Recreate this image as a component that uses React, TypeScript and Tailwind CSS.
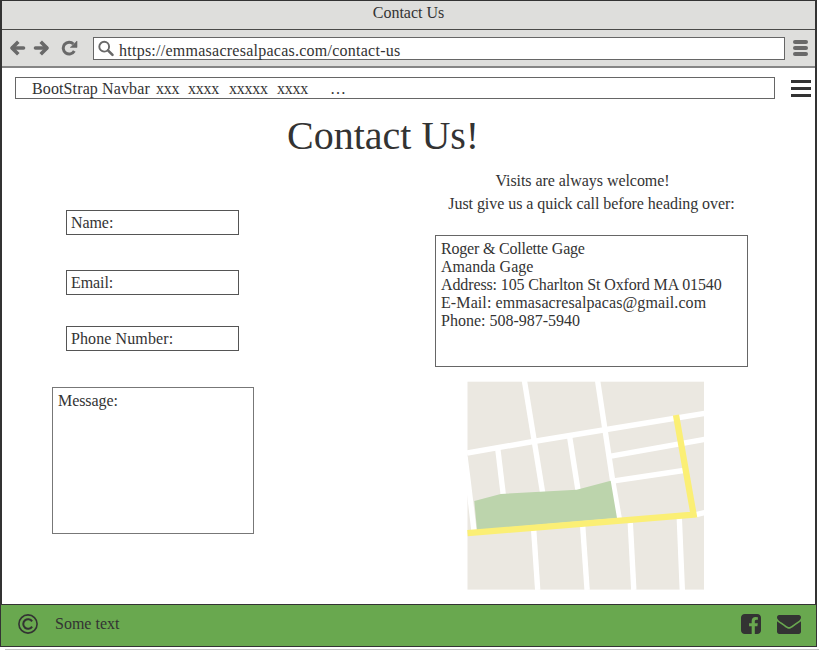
import React from 'react';

const BackIcon = () => (
  <svg width="17" height="16" viewBox="0 0 17 16" fill="none" stroke="#696969" strokeWidth="3.600" strokeLinejoin="round">
    <path d="M3.500 8H14.500" strokeLinecap="round" />
    <path d="M9.300 1.700 3 8 9.300 14.300" />
  </svg>
);

const ForwardIcon = () => (
  <svg width="17" height="16" viewBox="0 0 17 16" fill="none" stroke="#696969" strokeWidth="3.600" strokeLinejoin="round">
    <path d="M13.500 8H2.500" strokeLinecap="round" />
    <path d="M7.700 1.700 14 8 7.700 14.300" />
  </svg>
);

const ReloadIcon = () => (
  <svg width="17" height="16" viewBox="0 0 17 16">
    <path d="M13.300 11A5.900 5.900 0 1 1 12.400 4" fill="none" stroke="#696969" strokeWidth="3" />
    <path d="M16 1V7.400H9.300Z" fill="#696969" stroke="#696969" strokeWidth=".6" strokeLinejoin="round" />
  </svg>
);

const SearchIcon = () => (
  <svg width="17" height="17" viewBox="0 0 17 17" fill="none" stroke="#696969">
    <circle cx="6.200" cy="6.700" r="4.900" strokeWidth="1.900" />
    <path d="m10 10.300 4.500 4.600" strokeWidth="2.600" strokeLinecap="round" />
  </svg>
);

const FacebookIcon = () => (
  <svg width="20" height="20" viewBox="128 128 1536 1536" fill="#333">
    <path d="M1376 128q119 0 203.500 84.500t84.500 203.500v960q0 119-84.500 203.500t-203.500 84.500h-188v-595h199l30-232h-229v-148q0-56 23.500-84t91.500-28l122-1v-207q-63-9-178-9-136 0-217.500 80t-81.500 226v171h-200v232h200v595h-532q-119 0-203.500-84.500t-84.500-203.500v-960q0-119 84.500-203.500t203.500-84.500z" />
  </svg>
);

const EnvelopeIcon = () => (
  <svg width="24" height="19" viewBox="0 256 1792 1408" fill="#333">
    <path d="M1792 710v794q0 66-47 113t-113 47h-1472q-66 0-113-47t-47-113v-794q44 49 101 87 362 246 497 345 57 42 92.500 65.500t94.500 48 110 24.500h2q51 0 110-24.500t94.500-48 92.500-65.500q170-123 498-345 57-39 100-87zm0-294q0 79-49 151t-122 123q-376 261-468 325-10 7-42.500 31t-54 38.800-52 32.500-57.500 27-50 9h-2q-23 0-50-9t-57.500-27-52-32.500-54-38.800-42.500-31q-91-64-262-182.500t-205-142.500q-62-42-117-115.500t-55-136.500q0-78 41.500-130t118.500-52h1472q65 0 112.500 47t47.500 113z" />
  </svg>
);

const CopyrightIcon = () => (
  <svg width="20" height="20" viewBox="0 0 20 20" fill="none" stroke="#333">
    <circle cx="10" cy="10" r="9.100" strokeWidth="1.600" />
    <path d="M14.100 7.400A4.800 4.800 0 1 0 14.100 12.600" strokeWidth="2" />
  </svg>
);

const StreetMap = () => (
  <svg width="237" height="209" viewBox="0 0 237 209" className="ml-[32px] mt-[14px] block">
    <rect x=".5" y=".7" width="236.500" height="207.900" fill="#ebe8e1" />
    <g fill="none" stroke="#fff" strokeWidth="5.400">
      <path d="M0 72 66.300 60.500 136.300 49 238 32.300" />
      <path d="M57.300-1 75.700 112" />
      <path d="M130.500-1 145.700 100 152.300 138" />
      <path d="M30.700 67 36.300 114" />
      <path d="M102.500 55 111.300 111" />
      <path d="M144 75.200 238 58.300" />
      <path d="M147 99.800 216.500 89.500" />
      <path d="M-2 75.700 1 99 7 150" />
      <path d="M66.700 149 70.700 209" />
      <path d="M115.700 145 120.100 209" />
      <path d="M163.300 142 166.800 209" />
      <path d="M212.300 137 215.300 209" />
      <path d="M228 133.800 238 131.500" />
    </g>
    <path d="M7.300 120 33.700 113 109.700 108.700 143.700 99.700 150 137 10 149Z" fill="#bcd4ac" />
    <path d="M.5 152.200 226.600 133.600 209 34" fill="none" stroke="#fbef75" strokeWidth="6.300" />
  </svg>
);

function Field({ label, className }: { label: string; className: string }) {
  return (
    <div className={`ml-[14px] flex h-[25px] w-[173px] items-center border border-[#555] pl-[4px] ${className}`}>
      {label}
    </div>
  );
}

export default function App() {
  return (
    <div className="h-[650px] w-[819px] overflow-hidden bg-white font-['Liberation_Serif',serif] text-[16px] leading-[18px] text-[#333]">
      <div className="flex h-[647px] w-[817px] flex-col">
        <header className="border-x-2 border-t border-[#333] bg-[#dededc]">
          <div className="flex h-[29px] items-center justify-center border-b border-[#4a4a48] pb-[4px]">
            Contact Us
          </div>
          <div className="flex h-[38px] items-center border-b-2 border-[#858585] pl-[7px]">
            <BackIcon />
            <span className="ml-[7px]"><ForwardIcon /></span>
            <span className="ml-[11px]"><ReloadIcon /></span>
            <div className="ml-[15px] flex h-[23px] w-[692px] items-center border border-[#666] bg-white pl-[4px]">
              <SearchIcon />
              <span className="ml-[4px] pt-[6px] tracking-[0.25px]">https://emmasacresalpacas.com/contact-us</span>
            </div>
            <div className="ml-[8px] flex flex-col gap-[2px]">
              <span className="h-[4px] w-[15px] rounded-full bg-[#696969]" />
              <span className="h-[4px] w-[15px] rounded-full bg-[#696969]" />
              <span className="h-[4px] w-[15px] rounded-full bg-[#696969]" />
            </div>
          </div>
        </header>
        <main className="flex-1 border-x-2 border-[#333] bg-white">
          <nav className="mt-[9px] flex items-center pl-[13px]">
            <div className="flex h-[22px] w-[760px] items-center border border-[#666] pl-[16px] pt-[2px] tracking-[-0.25px]">
              <span className="w-[124px] tracking-[0.12px]">BootStrap Navbar</span>
              <span className="w-[32px]">xxx</span>
              <span className="w-[41px]">xxxx</span>
              <span className="w-[48px]">xxxxx</span>
              <span className="w-[53px]">xxxx</span>
              <span>…</span>
            </div>
            <div className="ml-[16px] flex flex-col gap-[4px]">
              <span className="h-[3px] w-[20px] bg-[#333]" />
              <span className="h-[3px] w-[20px] bg-[#333]" />
              <span className="h-[3px] w-[20px] bg-[#333]" />
            </div>
          </nav>
          <h1 className="ml-[285px] mt-[13px] text-[40px] leading-[48px]">Contact Us!</h1>
          <div className="flex">
            <form className="ml-[50px] mt-[50px] w-[202px] tracking-[-0.08px]">
              <Field label="Name:" className="" />
              <Field label="Email:" className="mt-[35px]" />
              <Field label="Phone Number:" className="mt-[31px] tracking-[0.1px]" />
              <div className="mt-[36px] h-[147px] border border-[#777] pl-[5px] pt-[4px]">Message:</div>
            </form>
            <section className="ml-[181px] mt-[9px] w-[313px]">
              <div className="text-center leading-[23px] tracking-[-0.05px]">
                <p className="-ml-[18px]">Visits are always welcome!</p>
                <p>Just give us a quick call before heading over:</p>
              </div>
              <address className="mt-[20px] h-[132px] whitespace-nowrap border border-[#666] pl-[5px] pt-[4px] not-italic">
                <p className="tracking-[-0.2px]">Roger &amp; Collette Gage</p>
                <p className="tracking-[0.05px]">Amanda Gage</p>
                <p className="tracking-[-0.12px]">Address: 105 Charlton St Oxford MA 01540</p>
                <p className="tracking-[0.1px]">E-Mail: emmasacresalpacas@gmail.com</p>
                <p>Phone: 508-987-5940</p>
              </address>
              <StreetMap />
            </section>
          </div>
        </main>
        <footer className="flex h-[43px] items-center border border-[#333] bg-[#69a84f] pb-[3px] pl-[17px] pr-[15px]">
          <CopyrightIcon />
          <span className="ml-[17px] pb-[1px]">Some text</span>
          <span className="ml-auto"><FacebookIcon /></span>
          <span className="ml-[16px]"><EnvelopeIcon /></span>
        </footer>
      </div>
      <div className="ml-[5px] mt-[2px] h-px bg-[#c4c4c4]" />
    </div>
  );
}
